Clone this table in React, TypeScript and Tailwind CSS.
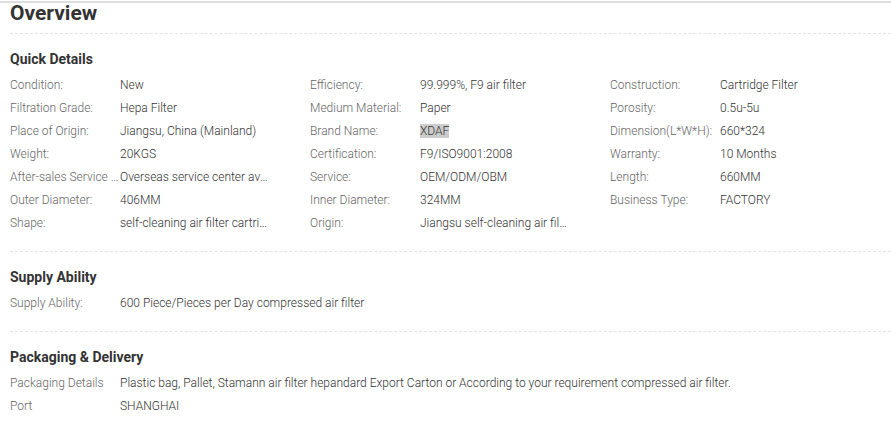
const quick: [string, string][][] = [
  [
    ['Condition:', 'New'],
    ['Filtration Grade:', 'Hepa Filter'],
    ['Place of Origin:', 'Jiangsu, China (Mainland)'],
    ['Weight:', '20KGS'],
    ['After-sales Service Provided:', 'Overseas service center available'],
    ['Outer Diameter:', '406MM'],
    ['Shape:', 'self-cleaning air filter cartridge'],
  ],
  [
    ['Efficiency:', '99.999%, F9 air filter'],
    ['Medium Material:', 'Paper'],
    ['Brand Name:', 'XDAF'],
    ['Certification:', 'F9/ISO9001:2008'],
    ['Service:', 'OEM/ODM/OBM'],
    ['Inner Diameter:', '324MM'],
    ['Origin:', 'Jiangsu self-cleaning air filter'],
  ],
  [
    ['Construction:', 'Cartridge Filter'],
    ['Porosity:', '0.5u-5u'],
    ['Dimension(L*W*H):', '660*324'],
    ['Warranty:', '10 Months'],
    ['Length:', '660MM'],
    ['Business Type:', 'FACTORY'],
  ],
];

function Row({ label, value }: { label: string; value: string }) {
  return (
    <div className="flex h-[23px] items-center leading-[23px]">
      <div className="w-[110px] shrink-0 truncate text-[#666]">{label}</div>
      <div className="w-[150px] truncate text-[#333]">
        {value === 'XDAF' ? <span className="bg-[#cccccc]">{value}</span> : value}
      </div>
    </div>
  );
}

function Section({ title, children }: { title: string; children: React.ReactNode }) {
  return (
    <section className="border-t border-dashed border-[#e3e3e3] pt-[15px] pb-[16px]">
      <h3 className="mb-[5px] h-[20px] text-[14px] leading-[20px] font-bold text-[#333]">{title}</h3>
      {children}
    </section>
  );
}

export default function App() {
  return (
    <div className="min-h-[432px] w-[891px] overflow-hidden bg-white pt-px font-['Roboto',sans-serif] text-[12px] font-light">
      <div className="border-t-2 border-[#dedede] pl-[10px]">
        <h2 className="h-[30px] text-[21px] leading-[20px] font-bold text-[#333]">Overview</h2>
        <Section title="Quick Details">
          <div className="grid grid-cols-[300px_300px_1fr]">
            {quick.map((col, i) => (
              <div key={i}>
                {col.map(([l, v]) => (
                  <Row key={l} label={l} value={v} />
                ))}
              </div>
            ))}
          </div>
        </Section>
        <Section title="Supply Ability">
          <div className="flex h-[23px] items-center leading-[23px]">
            <div className="w-[110px] shrink-0 text-[#666]">Supply Ability:</div>
            <div className="text-[#333]">600 Piece/Pieces per Day compressed air filter</div>
          </div>
        </Section>
        <Section title="Packaging &amp; Delivery">
          <div className="flex h-[23px] items-center leading-[23px]">
            <div className="w-[110px] shrink-0 text-[#666]">Packaging Details</div>
            <div className="text-[#333]">
              Plastic bag, Pallet, Stamann air filter hepandard Export Carton or According to your requirement compressed air filter.
            </div>
          </div>
          <div className="flex h-[23px] items-center leading-[23px]">
            <div className="w-[110px] shrink-0 text-[#666]">Port</div>
            <div className="text-[#333]">SHANGHAI</div>
          </div>
        </Section>
      </div>
    </div>
  );
}
